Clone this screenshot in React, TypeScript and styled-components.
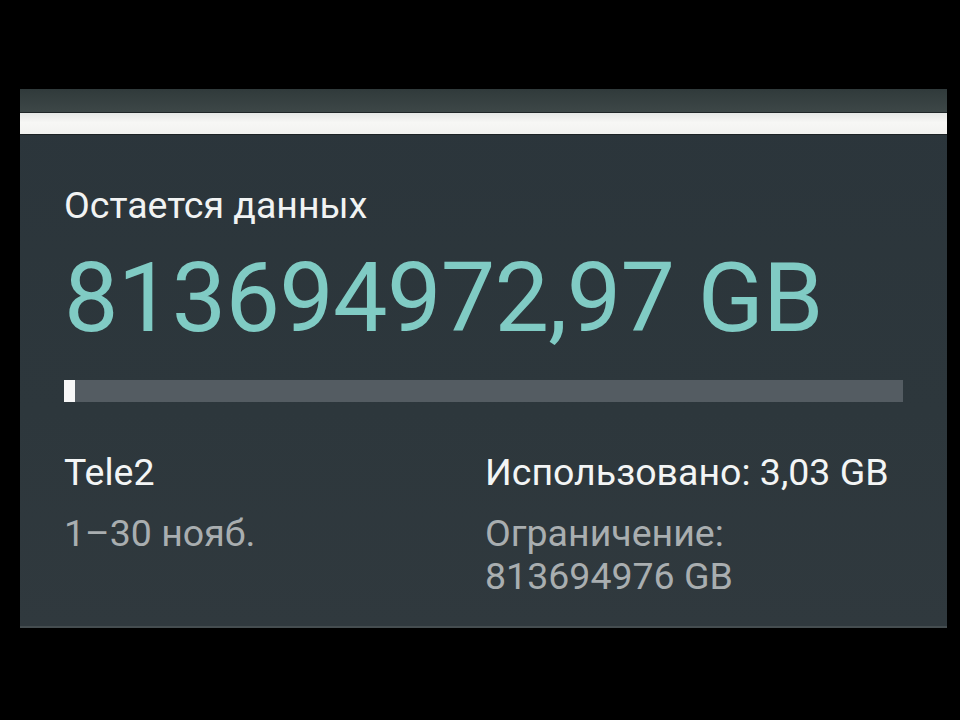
import styled, { createGlobalStyle } from 'styled-components';

const GlobalStyle = createGlobalStyle`
  html, body {
    margin: 0;
    padding: 0;
    background: #000000;
  }
  body {
    width: 960px;
    height: 720px;
    overflow: hidden;
    font-family: Roboto, "Noto Sans", "Liberation Sans", sans-serif;
  }
`;

const Screen = styled.div`
  width: 960px;
  height: 720px;
  background: #000000;
  padding: 89px 13px 0 20px;
  box-sizing: border-box;
`;

const Panel = styled.div`
  width: 927px;
  height: 539px;
  display: flex;
  flex-direction: column;
  background: linear-gradient(180deg, #2b353b 0%, #2d373c 60%, #30393e 100%);
  border-bottom: 2px solid #454d50;
  box-sizing: border-box;
`;

const TopStrip = styled.div`
  height: 23px;
  background: linear-gradient(180deg, #303a3b 0%, #3d4747 100%);
  border-bottom: 1px solid #1f2628;
`;

const WhiteBar = styled.div`
  height: 21px;
  background: linear-gradient(180deg, #e6e8e6 0%, #f7f7f5 45%, #f2f2f0 100%);
  border-bottom: 1px solid #1c2224;
`;

const Body = styled.div`
  padding: 48px 44px 0 44px;
  display: flex;
  flex-direction: column;
`;

const Title = styled.div`
  font-size: 37.5px;
  line-height: 44px;
  color: #f1f3f3;
`;

const Remaining = styled.div`
  margin-top: 16px;
  font-size: 97px;
  line-height: 110px;
  color: #80cbc4;
  letter-spacing: -0.7px;
`;

const Track = styled.div`
  margin-top: 27px;
  height: 22px;
  background: #545c62;
  display: flex;
`;

const Fill = styled.div<{ $pct: number }>`
  width: ${(p) => p.$pct}%;
  min-width: 11px;
  background: #f7f7f7;
`;

const Details = styled.div`
  margin-top: 48px;
  display: grid;
  grid-template-columns: 421px 1fr;
`;

const Column = styled.div`
  display: flex;
  flex-direction: column;
`;

const Primary = styled.div`
  font-size: 37.5px;
  line-height: 44px;
  color: #f3f5f5;
  margin-bottom: 18px;
`;

const Secondary = styled.div`
  font-size: 37.5px;
  line-height: 43px;
  color: #a9aeb0;
`;

export default function App() {
  const used = 3.03;
  const limit = 813694976;
  const pct = (used / limit) * 100;

  return (
    <Screen>
      <GlobalStyle />
      <Panel>
        <TopStrip />
        <WhiteBar />
        <Body>
          <Title>Остается данных</Title>
          <Remaining>813694972,97 GB</Remaining>
          <Track>
            <Fill $pct={pct} />
          </Track>
          <Details>
            <Column>
              <Primary>Tele2</Primary>
              <Secondary>1–30 нояб.</Secondary>
            </Column>
            <Column>
              <Primary>Использовано: 3,03 GB</Primary>
              <Secondary>
                Ограничение:
                <br />
                813694976 GB
              </Secondary>
            </Column>
          </Details>
        </Body>
      </Panel>
    </Screen>
  );
}
